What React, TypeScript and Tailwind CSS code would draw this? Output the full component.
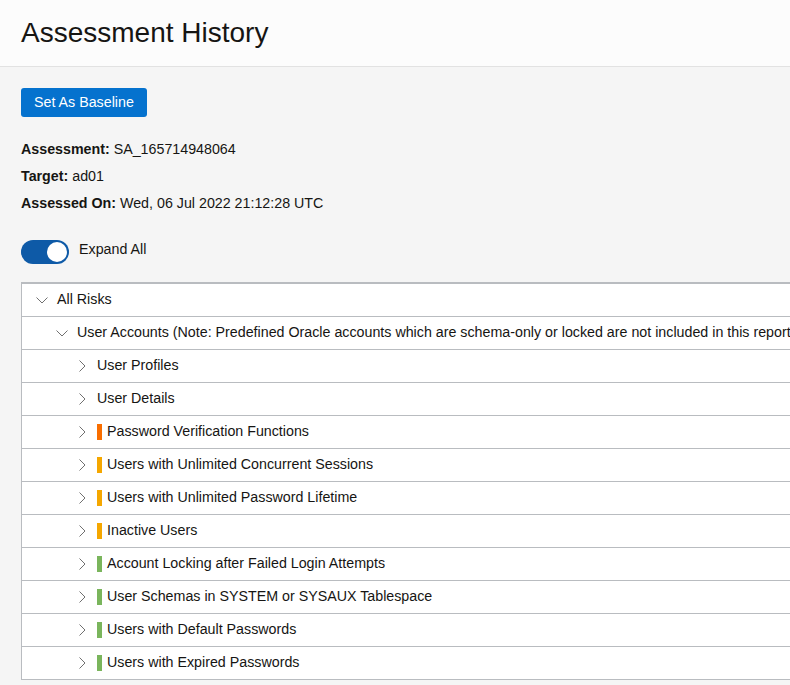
import { FC } from 'react';

type Row = {
  label: string;
  level: number;
  open?: boolean;
  risk?: 'high' | 'medium' | 'low';
};

const rows: Row[] = [
  { label: 'All Risks', level: 0, open: true },
  {
    label:
      'User Accounts (Note: Predefined Oracle accounts which are schema-only or locked are not included in this report)',
    level: 1,
    open: true,
  },
  { label: 'User Profiles', level: 2 },
  { label: 'User Details', level: 2 },
  { label: 'Password Verification Functions', level: 2, risk: 'high' },
  { label: 'Users with Unlimited Concurrent Sessions', level: 2, risk: 'medium' },
  { label: 'Users with Unlimited Password Lifetime', level: 2, risk: 'medium' },
  { label: 'Inactive Users', level: 2, risk: 'medium' },
  { label: 'Account Locking after Failed Login Attempts', level: 2, risk: 'low' },
  { label: 'User Schemas in SYSTEM or SYSAUX Tablespace', level: 2, risk: 'low' },
  { label: 'Users with Default Passwords', level: 2, risk: 'low' },
  { label: 'Users with Expired Passwords', level: 2, risk: 'low' },
];

const riskColor = {
  high: 'bg-[#f96e00]',
  medium: 'bg-[#f5a700]',
  low: 'bg-[#7ab55c]',
};

const indent = ['pl-[10px]', 'pl-[30px]', 'pl-[50px]'];

const Chevron: FC<{ open?: boolean }> = ({ open }) => (
  <span className="w-[20px] h-[20px] flex items-center justify-center shrink-0">
    {open ? (
      <svg width="12" height="7" viewBox="0 0 12 7" fill="none">
        <path d="M0.5 0.5L6 6L11.5 0.5" stroke="#707070" strokeWidth="1" />
      </svg>
    ) : (
      <svg width="7" height="12" viewBox="0 0 7 12" fill="none">
        <path d="M0.5 0.5L6 6L0.5 11.5" stroke="#707070" strokeWidth="1" />
      </svg>
    )}
  </span>
);

const TreeRow: FC<{ row: Row }> = ({ row }) => (
  <div
    className={`h-[32px] box-content border-b border-[#b9bcc0] flex items-center whitespace-nowrap ${indent[row.level]}`}
  >
    <Chevron open={row.open} />
    <span className="ml-[5px] flex items-center">
      {row.risk && (
        <span className={`w-[5px] h-[16px] mr-[5px] ${riskColor[row.risk]}`} />
      )}
      <span>{row.label}</span>
    </span>
  </div>
);

export default function App() {
  return (
    <div
      className="w-[790px] h-[685px] overflow-hidden bg-[#f5f5f5] text-[#161513] text-[14.25px]"
      style={{ fontFamily: '"Liberation Sans", Arial, sans-serif' }}
    >
      <div className="h-[67px] bg-[#fcfcfc] border-b border-[#e2e2e2] flex items-center px-[21px]">
        <h1 className="text-[28px] leading-none">Assessment History</h1>
      </div>

      <div className="pt-[21px] pl-[21px]">
        <button className="h-[29px] px-[13px] rounded-[3px] bg-[#0572ce] text-white text-[14.25px]">
          Set As Baseline
        </button>

        <div className="mt-[19px] leading-[27px]">
          <div>
            <span className="font-bold">Assessment:</span> SA_165714948064
          </div>
          <div>
            <span className="font-bold">Target:</span> ad01
          </div>
          <div>
            <span className="font-bold">Assessed On:</span> Wed, 06 Jul 2022
            21:12:28 UTC
          </div>
        </div>

        <div className="mt-[23px] flex items-center gap-[10px]">
          <div className="w-[48px] h-[24px] rounded-full bg-[#0e5aa7] flex items-center justify-end pr-[2px]">
            <span className="w-[20px] h-[20px] rounded-full bg-white" />
          </div>
          <span className="-mt-[4px]">Expand All</span>
        </div>

        <div className="mt-[18px] w-[1000px] bg-white border-l border-t-2 border-[#b9bcc0]">
          {rows.map((row) => (
            <TreeRow key={row.label} row={row} />
          ))}
        </div>
      </div>
    </div>
  );
}
